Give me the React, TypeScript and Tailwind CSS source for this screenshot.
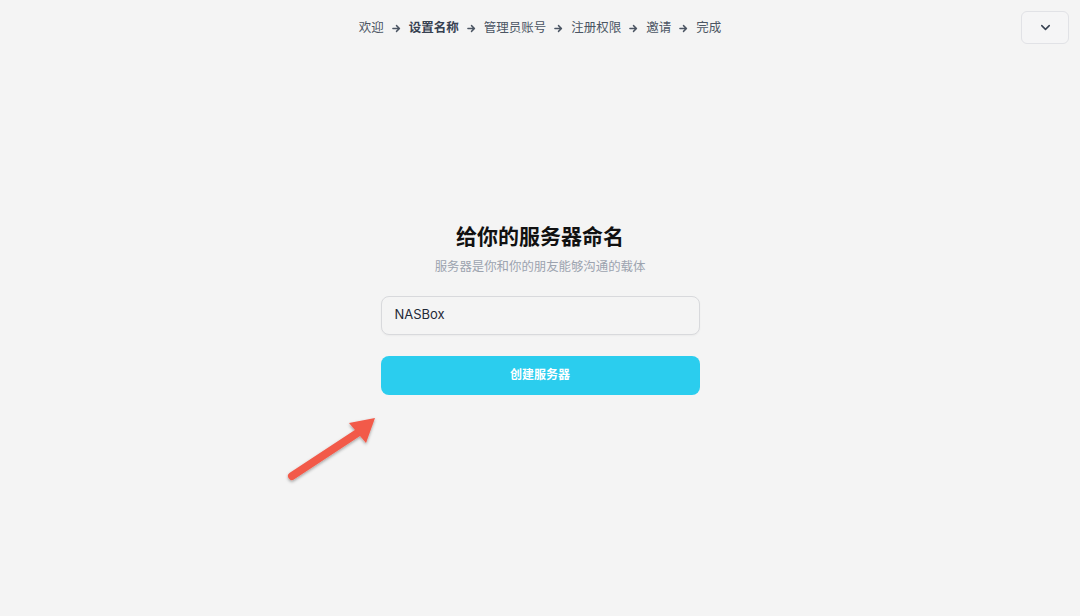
import { ChevronDown } from 'lucide-react';

const steps = ['欢迎', '设置名称', '管理员账号', '注册权限', '邀请', '完成'];

function Arrow() {
  return (
    <svg width="9" height="9" viewBox="0 0 10 10" className="shrink-0">
      <path d="M1 5h7M5 1.8L8.3 5 5 8.2" fill="none" stroke="#4b5563" strokeWidth="1.6" strokeLinecap="round" strokeLinejoin="round" />
    </svg>
  );
}

export default function App() {
  return (
    <div
      className="relative h-[616px] w-[1080px] overflow-hidden bg-[#f4f4f4] text-[#1f2937]"
      style={{ fontFamily: 'Inter, "Noto Sans CJK SC", sans-serif' }}
    >
      {/* Top bar */}
      <div className="grid grid-cols-[1fr_auto_1fr] items-start px-[11px] pt-[11px]">
        <div />
        <nav className="flex items-center gap-[8px] pt-[8px] text-[12.5px] text-[#4b5563]">
          {steps.map((s, i) => (
            <div key={s} className="flex items-center gap-[8px]">
              <span className={i === 1 ? 'font-semibold text-[#374151]' : ''}>{s}</span>
              {i < steps.length - 1 && <Arrow />}
            </div>
          ))}
        </nav>
        <div className="flex justify-end">
          <button className="flex h-[33px] w-[48px] items-center justify-center rounded-md border border-[#e1e2e6] bg-[#f5f5f6]">
            <ChevronDown size={15} strokeWidth={2.4} className="text-[#374151]" />
          </button>
        </div>
      </div>

      {/* Form */}
      <div className="mx-auto mt-[179px] flex w-[319px] flex-col items-center">
        <h1 className="text-[21px] font-bold leading-[28px] text-[#111111]">给你的服务器命名</h1>
        <p className="mt-[7px] text-[12.4px] text-[#9ca3af]">服务器是你和你的朋友能够沟通的载体</p>
        <div className="mt-[19px] flex h-[39px] w-full items-center rounded-lg border border-[#d8d9dc] bg-[#f4f4f4] px-[13px] text-[13px] text-[#1f2937] shadow-[0_1px_2px_rgba(0,0,0,0.04)]">
          NASBox
        </div>
        <button className="mt-[21px] flex h-[39px] w-full items-center justify-center rounded-lg bg-[#2bcdee] text-[12px] font-semibold text-white">
          创建服务器
        </button>
      </div>

      {/* Annotation arrow */}
      <svg className="absolute left-[280px] top-[410px]" width="110" height="80" viewBox="0 0 110 80">
        <defs>
          <filter id="sh" x="-20%" y="-20%" width="140%" height="140%">
            <feDropShadow dx="0" dy="1.5" stdDeviation="1.5" floodColor="#000" floodOpacity="0.35" />
          </filter>
        </defs>
        <g filter="url(#sh)">
          <line x1="12" y1="66" x2="82" y2="20" stroke="#f25a4a" strokeWidth="8" strokeLinecap="round" />
          <path d="M69 13 L95 8 L86 33 Z" fill="#f25a4a" />
        </g>
      </svg>
    </div>
  );
}
